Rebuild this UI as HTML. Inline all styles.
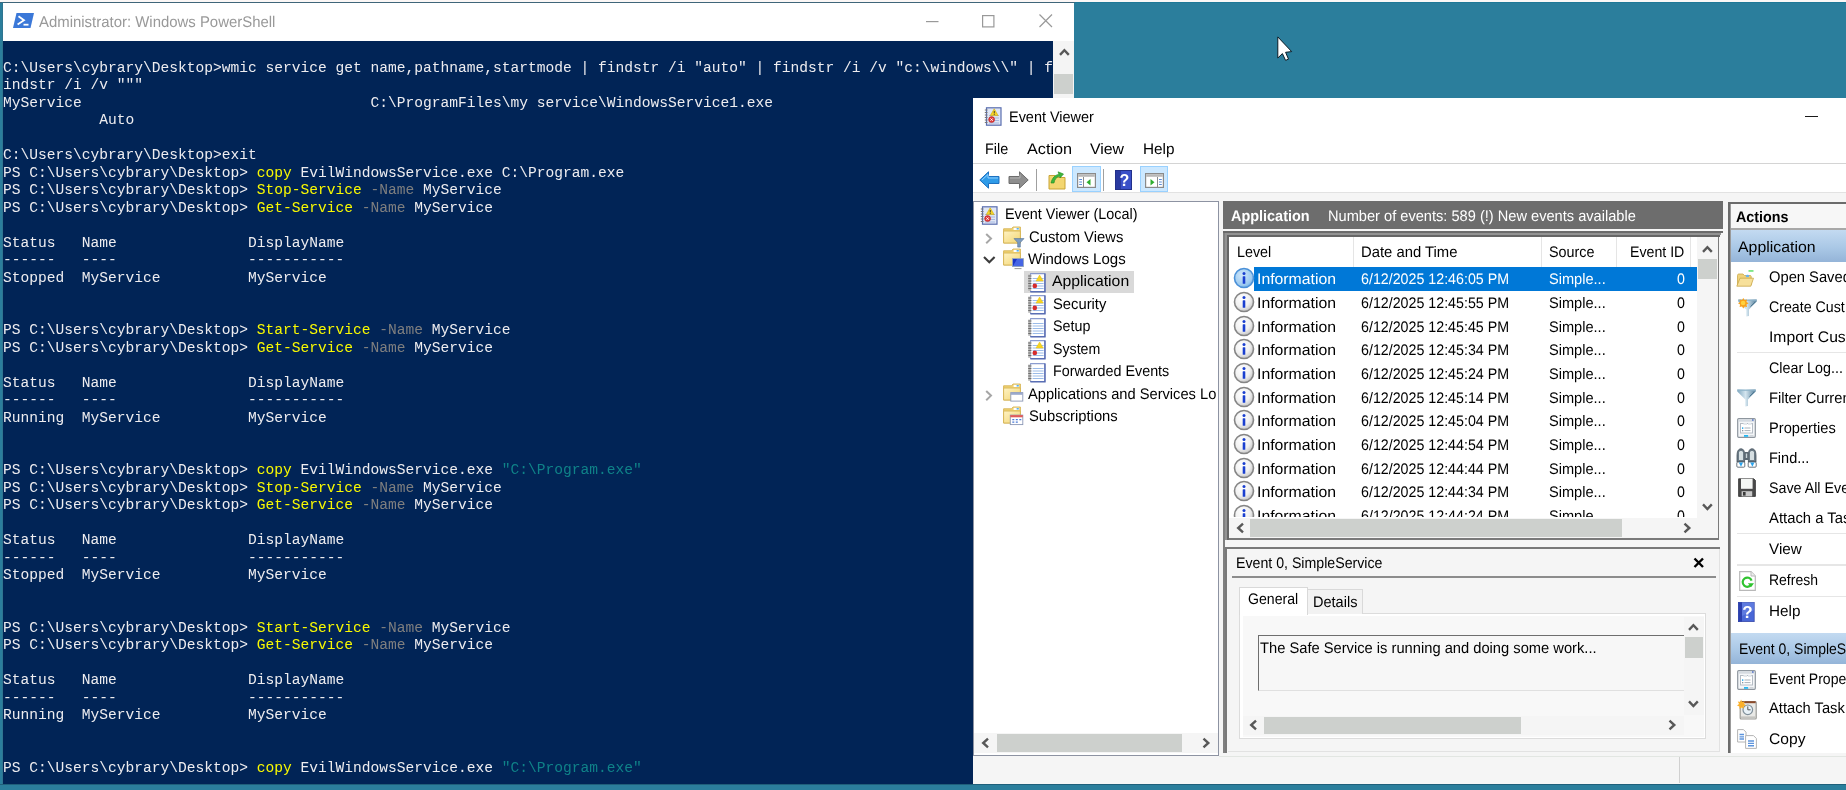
<!DOCTYPE html>
<html><head><meta charset="utf-8"><title>Desktop</title>
<style>
html,body{margin:0;padding:0}
body{width:1846px;height:790px;overflow:hidden;position:relative;background:#2b7e9c;font-family:"Liberation Sans",sans-serif;font-size:15.3px;color:#000}
.a{position:absolute}
.t{position:absolute;white-space:pre;line-height:20px;height:20px;transform-origin:0 0;text-rendering:geometricPrecision}
#ps{position:absolute;left:2px;top:2px;width:1072.3px;height:782.5px;overflow:hidden}
#con{position:absolute;left:.8px;top:38.6px;width:1050.4px;height:746px;background:#012456;overflow:hidden;color:#eeedf0;font-family:"Liberation Mono",monospace;font-size:14.583px}
.pl{position:absolute;left:.3px;white-space:pre;line-height:17.5px;height:17.5px}
svg{position:absolute;overflow:visible}
</style></head><body>
<div id="all" style="position:absolute;left:0;top:0;width:1846px;height:790px;overflow:hidden;will-change:transform;background:#2b7e9c">
<!-- top edge highlight -->
<div class="a" style="left:0;top:0;width:1846px;height:3.1px;background:#1f7897"></div>
<div class="a" style="left:0;top:0;width:1075px;height:3.1px;background:#3f667a"></div>
<div class="a" style="left:0;top:0;width:1846px;height:1.6px;background:#fbf7f6"></div>
<div id="ps">
  <div class="a" style="left:0;top:0;width:.8px;height:784px;background:#2f7590"></div><div class="a" style="left:.8px;top:1.1px;width:1071.5px;height:38px;background:#fff"></div>
  <svg style="left:10.8px;top:10.7px" width="21" height="15" viewBox="0 0 21 15"><path d="M3.5 0H21L17.5 15H0Z" fill="#3b78d8"/><path d="M5.5 3.2L11 7.3L4.6 11.6" fill="none" stroke="#fff" stroke-width="1.8"/><path d="M10.5 11.7H15.5" stroke="#fff" stroke-width="1.8"/></svg>
  <div class="t" id="pstitle" style="left:37px;top:11.2px;font-size:15.5px;color:#999;transform:scaleX(.963)">Administrator: Windows PowerShell</div>
  <svg style="left:923.5px;top:18.7px" width="13" height="2"><rect width="12.5" height="1.2" fill="#999"/></svg>
  <svg style="left:980px;top:12.5px" width="13" height="13"><rect x=".6" y=".6" width="11.3" height="11.3" fill="none" stroke="#999" stroke-width="1.2"/></svg>
  <svg style="left:1037px;top:12px" width="14" height="14"><path d="M.5 .5L13 13M13 .5L.5 13" stroke="#999" stroke-width="1.2" fill="none"/></svg>
  <div id="con">
<div class="pl" style="top:19.10px">C:\Users\cybrary\Desktop&gt;wmic service get name,pathname,startmode | findstr /i "auto" | findstr /i /v "c:\windows\\" | f</div>
<div class="pl" style="top:36.60px">indstr /i /v """</div>
<div class="pl" style="top:54.10px">MyService                                 C:\ProgramFiles\my service\WindowsService1.exe</div>
<div class="pl" style="top:71.60px">           Auto</div>
<div class="pl" style="top:106.60px">C:\Users\cybrary\Desktop&gt;exit</div>
<div class="pl" style="top:124.10px">PS C:\Users\cybrary\Desktop&gt; <span style="color:#f9f900">copy</span> EvilWindowsService.exe C:\Program.exe</div>
<div class="pl" style="top:141.60px">PS C:\Users\cybrary\Desktop&gt; <span style="color:#f9f900">Stop-Service</span><span style="color:#7f7f7f"> -Name</span> MyService</div>
<div class="pl" style="top:159.10px">PS C:\Users\cybrary\Desktop&gt; <span style="color:#f9f900">Get-Service</span><span style="color:#7f7f7f"> -Name</span> MyService</div>
<div class="pl" style="top:194.10px">Status   Name               DisplayName</div>
<div class="pl" style="top:211.60px">------   ----               -----------</div>
<div class="pl" style="top:229.10px">Stopped  MyService          MyService</div>
<div class="pl" style="top:281.60px">PS C:\Users\cybrary\Desktop&gt; <span style="color:#f9f900">Start-Service</span><span style="color:#7f7f7f"> -Name</span> MyService</div>
<div class="pl" style="top:299.10px">PS C:\Users\cybrary\Desktop&gt; <span style="color:#f9f900">Get-Service</span><span style="color:#7f7f7f"> -Name</span> MyService</div>
<div class="pl" style="top:334.10px">Status   Name               DisplayName</div>
<div class="pl" style="top:351.60px">------   ----               -----------</div>
<div class="pl" style="top:369.10px">Running  MyService          MyService</div>
<div class="pl" style="top:421.60px">PS C:\Users\cybrary\Desktop&gt; <span style="color:#f9f900">copy</span> EvilWindowsService.exe <span style="color:#0f8288">"C:\Program.exe"</span></div>
<div class="pl" style="top:439.10px">PS C:\Users\cybrary\Desktop&gt; <span style="color:#f9f900">Stop-Service</span><span style="color:#7f7f7f"> -Name</span> MyService</div>
<div class="pl" style="top:456.60px">PS C:\Users\cybrary\Desktop&gt; <span style="color:#f9f900">Get-Service</span><span style="color:#7f7f7f"> -Name</span> MyService</div>
<div class="pl" style="top:491.60px">Status   Name               DisplayName</div>
<div class="pl" style="top:509.10px">------   ----               -----------</div>
<div class="pl" style="top:526.60px">Stopped  MyService          MyService</div>
<div class="pl" style="top:579.10px">PS C:\Users\cybrary\Desktop&gt; <span style="color:#f9f900">Start-Service</span><span style="color:#7f7f7f"> -Name</span> MyService</div>
<div class="pl" style="top:596.60px">PS C:\Users\cybrary\Desktop&gt; <span style="color:#f9f900">Get-Service</span><span style="color:#7f7f7f"> -Name</span> MyService</div>
<div class="pl" style="top:631.60px">Status   Name               DisplayName</div>
<div class="pl" style="top:649.10px">------   ----               -----------</div>
<div class="pl" style="top:666.60px">Running  MyService          MyService</div>
<div class="pl" style="top:719.10px">PS C:\Users\cybrary\Desktop&gt; <span style="color:#f9f900">copy</span> EvilWindowsService.exe <span style="color:#0f8288">"C:\Program.exe"</span></div>
  </div>
  <!-- scrollbar -->
  <div class="a" style="left:1051.2px;top:38.6px;width:21.1px;height:746px;background:#f4f4f4"></div>
  <svg style="left:1056.5px;top:46px" width="11" height="8"><path d="M1 6.8L5.4 2.2L9.8 6.8" stroke="#585858" stroke-width="2.4" fill="none"/></svg>
  <div class="a" style="left:1052.3px;top:71.8px;width:18.4px;height:19.8px;background:#cdd0cd"></div>
</div>
<!-- mouse cursor -->
<svg style="left:1277.2px;top:36.3px" width="16" height="26" viewBox="0 0 16 26"><path d="M.8 .9V22L5.4 17.6L8.6 24.4L11.5 23.1L8.6 16.3L14.7 15.6Z" fill="#fff" stroke="#0a1a24" stroke-width="1" stroke-linejoin="round"/></svg>
<div class="a" style="left:972.5px;top:97.5px;width:880.0px;height:688.0px;background:#f5f5f5;"></div>
<div class="a" style="left:973.0px;top:98.0px;width:880.0px;height:95.0px;background:#fff;"></div>
<div class="a" style="left:973.0px;top:163.0px;width:880.0px;height:1.3px;background:#d4d4d4;"></div>
<div class="a" style="left:973.0px;top:192.2px;width:880.0px;height:1.2px;background:#e2e2e2;"></div>
<svg style="left:984.0px;top:106.5px" width="18" height="19" viewBox="0 0 18 19"><rect x="2.5" y=".8" width="14.5" height="17.4" fill="#dfe6f5" stroke="#5a6fb0" stroke-width="1.2"/>
<path d="M5 8.5H15M5 11H15M5 13.5H15M5 16H15" stroke="#9fb2e0" stroke-width=".9"/>
<path d="M.8 3H3.5M.8 5.5H3.5M.8 8H3.5M.8 10.5H3.5M.8 13H3.5M.8 15.5H3.5" stroke="#777" stroke-width="1"/>
<path d="M10.2 1.8L14.2 8.6H6.2Z" fill="#f5d327" stroke="#c9a400" stroke-width=".5"/>
<rect x="9.8" y="4" width=".9" height="2.4" fill="#333"/><rect x="9.8" y="7" width=".9" height=".8" fill="#333"/>
<circle cx="7.6" cy="12.6" r="3" fill="#e03a3a" stroke="#b01c1c" stroke-width=".5"/>
<path d="M6.4 11.4L8.8 13.8M8.8 11.4L6.4 13.8" stroke="#fff" stroke-width=".9"/></svg>
<div class="t" id="t1" style="left:1009.1px;top:108.0px;transform:scaleX(0.9447);">Event Viewer</div>
<div class="a" style="left:1805.2px;top:115.7px;width:13.0px;height:1.4px;background:#1a1a1a;"></div>
<div class="t" id="t2" style="left:985.3px;top:140.0px;transform:scaleX(0.9401);">File</div>
<div class="t" id="t3" style="left:1026.9px;top:140.0px;transform:scaleX(1.0613);">Action</div>
<div class="t" id="t4" style="left:1090.0px;top:140.0px;transform:scaleX(1.0359);">View</div>
<div class="t" id="t5" style="left:1142.5px;top:140.0px;transform:scaleX(1.0011);">Help</div>
<svg style="left:978.5px;top:170.8px" width="21" height="18.4" viewBox="0 0 21 18.4"><path d="M.8 9L9.5 .8V5.5H20V12.5H9.5V17.2Z" fill="#2f9be8" stroke="#1c6fc0" stroke-width="1"/><path d="M3 9L9 3.5V7H19" fill="none" stroke="#8fd0ff" stroke-width="1"/></svg>
<svg style="left:1007.5px;top:170.8px" width="21" height="18.4" viewBox="0 0 21 18.4"><path d="M20.2 9L11.5 .8V5.5H1V12.5H11.5V17.2Z" fill="#8e8e8e" stroke="#6c6c6c" stroke-width="1"/><path d="M2 7H12V3.5" fill="none" stroke="#b5b5b5" stroke-width="1"/></svg>
<div class="a" style="left:1035.6px;top:169.0px;width:1.2px;height:22.0px;background:#a0a0a0;"></div>
<svg style="left:1047.5px;top:171.0px" width="18" height="19" viewBox="0 0 18 19"><path d="M1 4.5H7L8.5 6.5H17V18H1Z" fill="#f3d671" stroke="#c9a437" stroke-width="1"/><path d="M3 12C4 7 7 4 11 3.2L10 .8L15.5 3L12 7L11.5 5C8.5 6 6.5 8.5 6 12Z" fill="#3db53d" stroke="#1f8a1f" stroke-width=".6"/></svg>
<div class="a" style="left:1072.0px;top:166.0px;width:28.5px;height:25.5px;background:#cce8ff;box-shadow:inset 0 0 0 1px #99d1ff"></div>
<svg style="left:1077.0px;top:172.5px" width="19" height="15" viewBox="0 0 19 15"><rect x=".6" y=".6" width="17.8" height="13.8" fill="#fff" stroke="#8a8a8a" stroke-width="1.2"/><rect x="1.2" y="1.2" width="16.6" height="2.6" fill="#b8b8b8"/><path d="M6.5 4V14" stroke="#8a8a8a" stroke-width="1"/><path d="M2.2 6.5H5M2.2 9H5M2.2 11.5H5" stroke="#5b8dd9" stroke-width="1.2"/><path d="M13.5 6L9.5 9.2L13.5 12.4Z" fill="#2fae2f"/></svg>
<div class="a" style="left:1103.0px;top:169.0px;width:1.2px;height:22.0px;background:#a0a0a0;"></div>
<svg style="left:1115.0px;top:169.5px" width="17" height="20" viewBox="0 0 17 20"><rect x=".5" y=".5" width="16" height="19" fill="#3a50c8" stroke="#22308a" stroke-width="1"/><path d="M1 1H6V19H1Z" fill="#2a3aa0"/><text x="9.3" y="15.5" font-family="Liberation Sans,sans-serif" font-size="16" font-weight="bold" fill="#fff" text-anchor="middle">?</text></svg>
<div class="a" style="left:1139.5px;top:166.0px;width:28.5px;height:25.5px;background:#cce8ff;box-shadow:inset 0 0 0 1px #99d1ff"></div>
<svg style="left:1144.5px;top:172.5px" width="19" height="15" viewBox="0 0 19 15"><rect x=".6" y=".6" width="17.8" height="13.8" fill="#fff" stroke="#8a8a8a" stroke-width="1.2"/><rect x="1.2" y="1.2" width="16.6" height="2.6" fill="#b8b8b8"/><path d="M12.5 4V14" stroke="#8a8a8a" stroke-width="1"/><path d="M14 6.5H16.8M14 9H16.8M14 11.5H16.8" stroke="#5b8dd9" stroke-width="1.2"/><path d="M5.5 6L9.5 9.2L5.5 12.4Z" fill="#2fae2f"/></svg>
<div class="a" style="left:973.3px;top:201.0px;width:245.7px;height:555.0px;background:#8d93a2;"></div>
<div class="a" style="left:974.3px;top:202.0px;width:244.2px;height:552.7px;background:#fff;"></div>
<svg style="left:980.3px;top:206.0px" width="18" height="19" viewBox="0 0 18 19"><rect x="2.5" y=".8" width="14.5" height="17.4" fill="#dfe6f5" stroke="#5a6fb0" stroke-width="1.2"/>
<path d="M5 8.5H15M5 11H15M5 13.5H15M5 16H15" stroke="#9fb2e0" stroke-width=".9"/>
<path d="M.8 3H3.5M.8 5.5H3.5M.8 8H3.5M.8 10.5H3.5M.8 13H3.5M.8 15.5H3.5" stroke="#777" stroke-width="1"/>
<path d="M10.2 1.8L14.2 8.6H6.2Z" fill="#f5d327" stroke="#c9a400" stroke-width=".5"/>
<rect x="9.8" y="4" width=".9" height="2.4" fill="#333"/><rect x="9.8" y="7" width=".9" height=".8" fill="#333"/>
<circle cx="7.6" cy="12.6" r="3" fill="#e03a3a" stroke="#b01c1c" stroke-width=".5"/>
<path d="M6.4 11.4L8.8 13.8M8.8 11.4L6.4 13.8" stroke="#fff" stroke-width=".9"/></svg>
<div class="t" id="t6" style="left:1005.3px;top:205.0px;transform:scaleX(0.9412);">Event Viewer (Local)</div>
<svg style="left:985.2px;top:233.0px" width="8" height="12" viewBox="0 0 8 12"><path d="M1.2 1L6 5.6L1.2 10.2" stroke="#a6a6a6" stroke-width="2" fill="none"/></svg>
<svg style="left:1003.0px;top:225.5px" width="21" height="23" viewBox="0 0 21 23"><defs><linearGradient id="fo" x1="0" x2="1" y1="0" y2="1"><stop offset="0" stop-color="#fff3c4"/><stop offset="1" stop-color="#f2d572"/></linearGradient></defs><path d="M.6 2.8H8.6L10 1H17.4V17H.6Z" fill="#f1d373" stroke="#d6b455" stroke-width=".9"/><rect x="10.6" y="1.8" width="5.6" height="2.2" fill="#fff"/><rect x="13.6" y="2.1" width="2.2" height="1.4" fill="#4aa8ea"/><path d="M.6 5H17.4V17H.6Z" fill="url(#fo)" stroke="#d6b455" stroke-width=".9"/><g transform="translate(0,1.6)"><path d="M11 11H21L17.3 15V19.5H14.7V15Z" fill="#7d9cc0" stroke="#4f6f96" stroke-width=".6"/></g></svg>
<div class="t" id="t7" style="left:1028.7px;top:228.0px;transform:scaleX(0.9677);">Custom Views</div>
<svg style="left:982.6px;top:256.2px" width="13" height="8" viewBox="0 0 13 8"><path d="M1 1L6.3 6.3L11.6 1" stroke="#3c3c3c" stroke-width="2.1" fill="none"/></svg>
<svg style="left:1003.0px;top:247.9px" width="21" height="23" viewBox="0 0 21 23"><defs><linearGradient id="fo" x1="0" x2="1" y1="0" y2="1"><stop offset="0" stop-color="#fff3c4"/><stop offset="1" stop-color="#f2d572"/></linearGradient></defs><path d="M.6 2.8H8.6L10 1H17.4V17H.6Z" fill="#f1d373" stroke="#d6b455" stroke-width=".9"/><rect x="10.6" y="1.8" width="5.6" height="2.2" fill="#fff"/><rect x="13.6" y="2.1" width="2.2" height="1.4" fill="#4aa8ea"/><path d="M.6 5H17.4V17H.6Z" fill="url(#fo)" stroke="#d6b455" stroke-width=".9"/><g transform="translate(0,1.6)"><rect x="9.5" y="9" width="11" height="8" fill="#1a35c8" stroke="#9ab" stroke-width=".8"/><path d="M10 16.5L14 9.5H20V16.5Z" fill="#5a7af0" opacity=".7"/><path d="M11.5 19H18.5" stroke="#999" stroke-width="1"/></g></svg>
<div class="t" id="t8" style="left:1028.2px;top:250.0px;transform:scaleX(0.9817);">Windows Logs</div>
<div class="a" style="left:1024.3px;top:271.0px;width:109.7px;height:22.0px;background:#d9d9d9;"></div>
<svg style="left:1028.0px;top:272.9px" width="18" height="19" viewBox="0 0 18 19"><rect x="2.6" y=".7" width="14.2" height="17.8" fill="#fff" stroke="#6f84c4" stroke-width="1"/><path d="M17 .4V18.8H2.4" fill="none" stroke="#5468b0" stroke-width="1.3"/><path d="M4.6 5.5H15.6M4.6 8H15.6M4.6 10.5H15.6M4.6 13H15.6M4.6 15.5H15.6" stroke="#9bbbe8" stroke-width="1.1"/><rect x=".2" y="1.6" width="2.8" height="16.2" fill="#b9b9b9"/><path d="M.2 3H3.4M.2 5.5H3.4M.2 8H3.4M.2 10.5H3.4M.2 13H3.4M.2 15.5H3.4" stroke="#6e6e6e" stroke-width="1.1"/><path d="M11.6 2L15.2 8H8Z" fill="#f7d422" stroke="#e8c010" stroke-width=".5"/><circle cx="6.8" cy="12.9" r="2.3" fill="#d62c2c"/></svg>
<div class="t" id="t9" style="left:1052.2px;top:272.0px;transform:scaleX(1.0310);">Application</div>
<svg style="left:1028.0px;top:295.3px" width="18" height="19" viewBox="0 0 18 19"><rect x="2.6" y=".7" width="14.2" height="17.8" fill="#fff" stroke="#6f84c4" stroke-width="1"/><path d="M17 .4V18.8H2.4" fill="none" stroke="#5468b0" stroke-width="1.3"/><path d="M4.6 5.5H15.6M4.6 8H15.6M4.6 10.5H15.6M4.6 13H15.6M4.6 15.5H15.6" stroke="#9bbbe8" stroke-width="1.1"/><rect x=".2" y="1.6" width="2.8" height="16.2" fill="#b9b9b9"/><path d="M.2 3H3.4M.2 5.5H3.4M.2 8H3.4M.2 10.5H3.4M.2 13H3.4M.2 15.5H3.4" stroke="#6e6e6e" stroke-width="1.1"/><path d="M11.6 2L15.2 8H8Z" fill="#f7d422" stroke="#e8c010" stroke-width=".5"/><circle cx="6.8" cy="12.9" r="2.3" fill="#d62c2c"/></svg>
<div class="t" id="t10" style="left:1053.1px;top:295.0px;transform:scaleX(0.9650);">Security</div>
<svg style="left:1028.0px;top:317.7px" width="18" height="19" viewBox="0 0 18 19"><rect x="2.6" y=".7" width="14.2" height="17.8" fill="#fff" stroke="#6f84c4" stroke-width="1"/><path d="M17 .4V18.8H2.4" fill="none" stroke="#5468b0" stroke-width="1.3"/><path d="M4.6 5.5H15.6M4.6 8H15.6M4.6 10.5H15.6M4.6 13H15.6M4.6 15.5H15.6" stroke="#9bbbe8" stroke-width="1.1"/><rect x=".2" y="1.6" width="2.8" height="16.2" fill="#b9b9b9"/><path d="M.2 3H3.4M.2 5.5H3.4M.2 8H3.4M.2 10.5H3.4M.2 13H3.4M.2 15.5H3.4" stroke="#6e6e6e" stroke-width="1.1"/></svg>
<div class="t" id="t11" style="left:1053.2px;top:317.0px;transform:scaleX(0.9346);">Setup</div>
<svg style="left:1028.0px;top:340.1px" width="18" height="19" viewBox="0 0 18 19"><rect x="2.6" y=".7" width="14.2" height="17.8" fill="#fff" stroke="#6f84c4" stroke-width="1"/><path d="M17 .4V18.8H2.4" fill="none" stroke="#5468b0" stroke-width="1.3"/><path d="M4.6 5.5H15.6M4.6 8H15.6M4.6 10.5H15.6M4.6 13H15.6M4.6 15.5H15.6" stroke="#9bbbe8" stroke-width="1.1"/><rect x=".2" y="1.6" width="2.8" height="16.2" fill="#b9b9b9"/><path d="M.2 3H3.4M.2 5.5H3.4M.2 8H3.4M.2 10.5H3.4M.2 13H3.4M.2 15.5H3.4" stroke="#6e6e6e" stroke-width="1.1"/><path d="M11.6 2L15.2 8H8Z" fill="#f7d422" stroke="#e8c010" stroke-width=".5"/><circle cx="6.8" cy="12.9" r="2.3" fill="#d62c2c"/></svg>
<div class="t" id="t12" style="left:1053.2px;top:340.0px;transform:scaleX(0.9265);">System</div>
<svg style="left:1028.0px;top:362.5px" width="18" height="19" viewBox="0 0 18 19"><rect x="2.6" y=".7" width="14.2" height="17.8" fill="#fff" stroke="#6f84c4" stroke-width="1"/><path d="M17 .4V18.8H2.4" fill="none" stroke="#5468b0" stroke-width="1.3"/><path d="M4.6 5.5H15.6M4.6 8H15.6M4.6 10.5H15.6M4.6 13H15.6M4.6 15.5H15.6" stroke="#9bbbe8" stroke-width="1.1"/><rect x=".2" y="1.6" width="2.8" height="16.2" fill="#b9b9b9"/><path d="M.2 3H3.4M.2 5.5H3.4M.2 8H3.4M.2 10.5H3.4M.2 13H3.4M.2 15.5H3.4" stroke="#6e6e6e" stroke-width="1.1"/></svg>
<div class="t" id="t13" style="left:1053.2px;top:362.0px;transform:scaleX(0.9366);">Forwarded Events</div>
<svg style="left:985.2px;top:390.0px" width="8" height="12" viewBox="0 0 8 12"><path d="M1.2 1L6 5.6L1.2 10.2" stroke="#a6a6a6" stroke-width="2" fill="none"/></svg>
<svg style="left:1003.0px;top:383.3px" width="21" height="23" viewBox="0 0 21 23"><defs><linearGradient id="fo" x1="0" x2="1" y1="0" y2="1"><stop offset="0" stop-color="#fff3c4"/><stop offset="1" stop-color="#f2d572"/></linearGradient></defs><path d="M.6 2.8H8.6L10 1H17.4V17H.6Z" fill="#f1d373" stroke="#d6b455" stroke-width=".9"/><rect x="10.6" y="1.8" width="5.6" height="2.2" fill="#fff"/><rect x="13.6" y="2.1" width="2.2" height="1.4" fill="#4aa8ea"/><path d="M.6 5H17.4V17H.6Z" fill="url(#fo)" stroke="#d6b455" stroke-width=".9"/><g transform="translate(0,1.6)"><g transform="translate(-1.2,-2)"><rect x="9" y="10" width="12" height="8.5" fill="#fff" stroke="#8a97b5" stroke-width=".9"/><rect x="9" y="10" width="12" height="2.2" fill="#9aa9cc"/></g></g></svg>
<div class="t" id="t14" style="left:1028.2px;top:385.0px;transform:scaleX(0.9587);">Applications and Services Lo</div>
<svg style="left:1003.0px;top:405.7px" width="21" height="23" viewBox="0 0 21 23"><defs><linearGradient id="fo" x1="0" x2="1" y1="0" y2="1"><stop offset="0" stop-color="#fff3c4"/><stop offset="1" stop-color="#f2d572"/></linearGradient></defs><path d="M.6 2.8H8.6L10 1H17.4V17H.6Z" fill="#f1d373" stroke="#d6b455" stroke-width=".9"/><rect x="10.6" y="1.8" width="5.6" height="2.2" fill="#fff"/><rect x="13.6" y="2.1" width="2.2" height="1.4" fill="#4aa8ea"/><path d="M.6 5H17.4V17H.6Z" fill="url(#fo)" stroke="#d6b455" stroke-width=".9"/><g transform="translate(0,1.6)"><g transform="translate(-1.2,-2)"><rect x="8.5" y="9.5" width="12.5" height="9.5" fill="#fff" stroke="#8a97b5" stroke-width=".9"/><rect x="8.5" y="9.5" width="12.5" height="2.2" fill="#e05a5a"/><path d="M10.5 14H12.5M14 14H16M17.5 14H19.5M10.5 16.5H12.5M14 16.5H16" stroke="#4a7ad8" stroke-width="1.4"/></g></g></svg>
<div class="t" id="t15" style="left:1029.4px;top:407.0px;transform:scaleX(0.9663);">Subscriptions</div>
<div class="a" style="left:974.3px;top:733.0px;width:244.2px;height:20.4px;background:#f5f5f5;"></div>
<div class="a" style="left:997.0px;top:734.3px;width:184.5px;height:17.5px;background:#cdd0cd;"></div>
<svg style="left:981.0px;top:736.8px" width="8" height="12" viewBox="0 0 8 12"><path d="M7 1.6L2.2 6L7 10.4" stroke="#585858" stroke-width="2.4" fill="none"/></svg>
<svg style="left:1202.0px;top:736.8px" width="8" height="12" viewBox="0 0 8 12"><path d="M1.5 1.6L6.3 6L1.5 10.4" stroke="#585858" stroke-width="2.4" fill="none"/></svg>
<div class="a" style="left:1223.2px;top:201.4px;width:499.5px;height:27.4px;background:#6d6d6d;"></div>
<div class="t" id="t16" style="left:1230.7px;top:207.0px;color:#fff;font-weight:bold;transform:scaleX(0.9435);">Application</div>
<div class="t" id="t17" style="left:1327.7px;top:207.0px;color:#fff;transform:scaleX(0.9552);">Number of events: 589 (!) New events available</div>
<div class="a" style="left:1223.2px;top:229.0px;width:505.5px;height:525.0px;background:#f6f6f6;"></div>
<div class="a" style="left:1223.2px;top:231.4px;width:2.0px;height:522.0px;background:#808080;"></div>
<div class="a" style="left:1223.2px;top:231.4px;width:499.5px;height:1.9px;background:#6b6b6b;"></div>
<div class="a" style="left:1224.7px;top:233.3px;width:496.5px;height:1.9px;background:#939393;"></div>
<div class="a" style="left:1226.2px;top:235.2px;width:493.5px;height:1.8px;background:#666;"></div>
<div class="a" style="left:1225.2px;top:233.3px;width:2.0px;height:306.3px;background:#939393;"></div>
<div class="a" style="left:1227.2px;top:235.2px;width:1.7px;height:304.4px;background:#666;"></div>
<div class="a" style="left:1718.1px;top:237.0px;width:1.2px;height:302.6px;background:#7a7a7a;"></div>
<div class="a" style="left:1228.9px;top:538.0px;width:490.4px;height:1.6px;background:#7a7a7a;"></div>
<div class="a" style="left:1228.9px;top:237.0px;width:489.3px;height:300.5px;background:#fff;"></div>
<div class="a" style="left:1353.0px;top:237.0px;width:1.2px;height:29.5px;background:#e5e5e5;"></div>
<div class="a" style="left:1541.0px;top:237.0px;width:1.2px;height:29.5px;background:#e5e5e5;"></div>
<div class="a" style="left:1615.5px;top:237.0px;width:1.2px;height:29.5px;background:#e5e5e5;"></div>
<div class="a" style="left:1690.3px;top:237.0px;width:1.2px;height:29.5px;background:#e5e5e5;"></div>
<div class="t" id="t18" style="left:1236.5px;top:243.0px;transform:scaleX(0.9341);">Level</div>
<div class="t" id="t19" style="left:1361.0px;top:243.0px;transform:scaleX(0.9694);">Date and Time</div>
<div class="t" id="t20" style="left:1549.1px;top:243.0px;transform:scaleX(0.9383);">Source</div>
<div class="t" id="t21" style="left:1630.1px;top:243.0px;transform:scaleX(0.9264);">Event ID</div>
<div class="a" style="left:1228.9px;top:267.0px;width:468.1px;height:250.3px;overflow:hidden">
<svg width="0" height="0" style="left:0;top:0"><defs><radialGradient id="g1" cx=".4" cy=".35" r=".75"><stop offset="0" stop-color="#fff"/><stop offset=".55" stop-color="#f0f0f0"/><stop offset="1" stop-color="#b8b8b8"/></radialGradient><radialGradient id="g2" cx=".4" cy=".35" r=".75"><stop offset="0" stop-color="#cfe6fa"/><stop offset=".7" stop-color="#9ccaf0"/><stop offset="1" stop-color="#5aa0e0"/></radialGradient></defs></svg>
<div class="a" style="left:25.3px;top:0.1px;width:442.8px;height:23.6px;background:#0078d7;"></div>
<svg style="left:5.1px;top:1.2px" width="20" height="20" viewBox="0 0 20 20"><circle cx="10" cy="10" r="9.5" fill="url(#g2)" stroke="#4a90d8" stroke-width="1.6"/><circle cx="10" cy="5.6" r="1.5" fill="#1a3fd0"/><rect x="8.7" y="8.2" width="2.6" height="7.6" rx=".6" fill="#1a3fd0"/></svg>
<div class="t" id="t22" style="left:27.8px;top:3.0px;color:#fff;transform:scaleX(1.0331);">Information</div>
<div class="t" id="t23" style="left:132.5px;top:3.0px;color:#fff;transform:scaleX(0.9309);">6/12/2025 12:46:05 PM</div>
<div class="t" id="t24" style="left:320.1px;top:3.0px;color:#fff;transform:scaleX(0.9528);">Simple...</div>
<div class="t" id="t25" style="left:447.8px;top:3.0px;color:#fff;transform:scaleX(0.9300);">0</div>
<svg style="left:5.1px;top:24.9px" width="20" height="20" viewBox="0 0 20 20"><circle cx="10" cy="10" r="9.5" fill="url(#g1)" stroke="#858585" stroke-width="1.6"/><circle cx="10" cy="5.6" r="1.5" fill="#1a3fd0"/><rect x="8.7" y="8.2" width="2.6" height="7.6" rx=".6" fill="#1a3fd0"/></svg>
<div class="t" id="t26" style="left:27.8px;top:27.0px;transform:scaleX(1.0331);">Information</div>
<div class="t" id="t27" style="left:132.5px;top:27.0px;transform:scaleX(0.9309);">6/12/2025 12:45:55 PM</div>
<div class="t" id="t28" style="left:320.1px;top:27.0px;transform:scaleX(0.9528);">Simple...</div>
<div class="t" id="t29" style="left:447.8px;top:27.0px;transform:scaleX(0.9300);">0</div>
<svg style="left:5.1px;top:48.6px" width="20" height="20" viewBox="0 0 20 20"><circle cx="10" cy="10" r="9.5" fill="url(#g1)" stroke="#858585" stroke-width="1.6"/><circle cx="10" cy="5.6" r="1.5" fill="#1a3fd0"/><rect x="8.7" y="8.2" width="2.6" height="7.6" rx=".6" fill="#1a3fd0"/></svg>
<div class="t" id="t30" style="left:27.8px;top:51.0px;transform:scaleX(1.0331);">Information</div>
<div class="t" id="t31" style="left:132.5px;top:51.0px;transform:scaleX(0.9309);">6/12/2025 12:45:45 PM</div>
<div class="t" id="t32" style="left:320.1px;top:51.0px;transform:scaleX(0.9528);">Simple...</div>
<div class="t" id="t33" style="left:447.8px;top:51.0px;transform:scaleX(0.9300);">0</div>
<svg style="left:5.1px;top:72.2px" width="20" height="20" viewBox="0 0 20 20"><circle cx="10" cy="10" r="9.5" fill="url(#g1)" stroke="#858585" stroke-width="1.6"/><circle cx="10" cy="5.6" r="1.5" fill="#1a3fd0"/><rect x="8.7" y="8.2" width="2.6" height="7.6" rx=".6" fill="#1a3fd0"/></svg>
<div class="t" id="t34" style="left:27.8px;top:74.0px;transform:scaleX(1.0331);">Information</div>
<div class="t" id="t35" style="left:132.5px;top:74.0px;transform:scaleX(0.9309);">6/12/2025 12:45:34 PM</div>
<div class="t" id="t36" style="left:320.1px;top:74.0px;transform:scaleX(0.9528);">Simple...</div>
<div class="t" id="t37" style="left:447.8px;top:74.0px;transform:scaleX(0.9300);">0</div>
<svg style="left:5.1px;top:95.9px" width="20" height="20" viewBox="0 0 20 20"><circle cx="10" cy="10" r="9.5" fill="url(#g1)" stroke="#858585" stroke-width="1.6"/><circle cx="10" cy="5.6" r="1.5" fill="#1a3fd0"/><rect x="8.7" y="8.2" width="2.6" height="7.6" rx=".6" fill="#1a3fd0"/></svg>
<div class="t" id="t38" style="left:27.8px;top:98.0px;transform:scaleX(1.0331);">Information</div>
<div class="t" id="t39" style="left:132.5px;top:98.0px;transform:scaleX(0.9309);">6/12/2025 12:45:24 PM</div>
<div class="t" id="t40" style="left:320.1px;top:98.0px;transform:scaleX(0.9528);">Simple...</div>
<div class="t" id="t41" style="left:447.8px;top:98.0px;transform:scaleX(0.9300);">0</div>
<svg style="left:5.1px;top:119.6px" width="20" height="20" viewBox="0 0 20 20"><circle cx="10" cy="10" r="9.5" fill="url(#g1)" stroke="#858585" stroke-width="1.6"/><circle cx="10" cy="5.6" r="1.5" fill="#1a3fd0"/><rect x="8.7" y="8.2" width="2.6" height="7.6" rx=".6" fill="#1a3fd0"/></svg>
<div class="t" id="t42" style="left:27.8px;top:122.0px;transform:scaleX(1.0331);">Information</div>
<div class="t" id="t43" style="left:132.5px;top:122.0px;transform:scaleX(0.9309);">6/12/2025 12:45:14 PM</div>
<div class="t" id="t44" style="left:320.1px;top:122.0px;transform:scaleX(0.9528);">Simple...</div>
<div class="t" id="t45" style="left:447.8px;top:122.0px;transform:scaleX(0.9300);">0</div>
<svg style="left:5.1px;top:143.3px" width="20" height="20" viewBox="0 0 20 20"><circle cx="10" cy="10" r="9.5" fill="url(#g1)" stroke="#858585" stroke-width="1.6"/><circle cx="10" cy="5.6" r="1.5" fill="#1a3fd0"/><rect x="8.7" y="8.2" width="2.6" height="7.6" rx=".6" fill="#1a3fd0"/></svg>
<div class="t" id="t46" style="left:27.8px;top:145.0px;transform:scaleX(1.0331);">Information</div>
<div class="t" id="t47" style="left:132.5px;top:145.0px;transform:scaleX(0.9309);">6/12/2025 12:45:04 PM</div>
<div class="t" id="t48" style="left:320.1px;top:145.0px;transform:scaleX(0.9528);">Simple...</div>
<div class="t" id="t49" style="left:447.8px;top:145.0px;transform:scaleX(0.9300);">0</div>
<svg style="left:5.1px;top:167.0px" width="20" height="20" viewBox="0 0 20 20"><circle cx="10" cy="10" r="9.5" fill="url(#g1)" stroke="#858585" stroke-width="1.6"/><circle cx="10" cy="5.6" r="1.5" fill="#1a3fd0"/><rect x="8.7" y="8.2" width="2.6" height="7.6" rx=".6" fill="#1a3fd0"/></svg>
<div class="t" id="t50" style="left:27.8px;top:169.0px;transform:scaleX(1.0331);">Information</div>
<div class="t" id="t51" style="left:132.5px;top:169.0px;transform:scaleX(0.9309);">6/12/2025 12:44:54 PM</div>
<div class="t" id="t52" style="left:320.1px;top:169.0px;transform:scaleX(0.9528);">Simple...</div>
<div class="t" id="t53" style="left:447.8px;top:169.0px;transform:scaleX(0.9300);">0</div>
<svg style="left:5.1px;top:190.6px" width="20" height="20" viewBox="0 0 20 20"><circle cx="10" cy="10" r="9.5" fill="url(#g1)" stroke="#858585" stroke-width="1.6"/><circle cx="10" cy="5.6" r="1.5" fill="#1a3fd0"/><rect x="8.7" y="8.2" width="2.6" height="7.6" rx=".6" fill="#1a3fd0"/></svg>
<div class="t" id="t54" style="left:27.8px;top:193.0px;transform:scaleX(1.0331);">Information</div>
<div class="t" id="t55" style="left:132.5px;top:193.0px;transform:scaleX(0.9309);">6/12/2025 12:44:44 PM</div>
<div class="t" id="t56" style="left:320.1px;top:193.0px;transform:scaleX(0.9528);">Simple...</div>
<div class="t" id="t57" style="left:447.8px;top:193.0px;transform:scaleX(0.9300);">0</div>
<svg style="left:5.1px;top:214.3px" width="20" height="20" viewBox="0 0 20 20"><circle cx="10" cy="10" r="9.5" fill="url(#g1)" stroke="#858585" stroke-width="1.6"/><circle cx="10" cy="5.6" r="1.5" fill="#1a3fd0"/><rect x="8.7" y="8.2" width="2.6" height="7.6" rx=".6" fill="#1a3fd0"/></svg>
<div class="t" id="t58" style="left:27.8px;top:216.0px;transform:scaleX(1.0331);">Information</div>
<div class="t" id="t59" style="left:132.5px;top:216.0px;transform:scaleX(0.9309);">6/12/2025 12:44:34 PM</div>
<div class="t" id="t60" style="left:320.1px;top:216.0px;transform:scaleX(0.9528);">Simple...</div>
<div class="t" id="t61" style="left:447.8px;top:216.0px;transform:scaleX(0.9300);">0</div>
<svg style="left:5.1px;top:238.0px" width="20" height="20" viewBox="0 0 20 20"><circle cx="10" cy="10" r="9.5" fill="url(#g1)" stroke="#858585" stroke-width="1.6"/><circle cx="10" cy="5.6" r="1.5" fill="#1a3fd0"/><rect x="8.7" y="8.2" width="2.6" height="7.6" rx=".6" fill="#1a3fd0"/></svg>
<div class="t" id="t62" style="left:27.8px;top:240.0px;transform:scaleX(1.0331);">Information</div>
<div class="t" id="t63" style="left:132.5px;top:240.0px;transform:scaleX(0.9309);">6/12/2025 12:44:24 PM</div>
<div class="t" id="t64" style="left:320.1px;top:240.0px;transform:scaleX(0.9528);">Simple...</div>
<div class="t" id="t65" style="left:447.8px;top:240.0px;transform:scaleX(0.9300);">0</div>
</div>
<div class="a" style="left:1697.0px;top:237.0px;width:21.2px;height:280.6px;background:#f5f5f5;"></div>
<div class="a" style="left:1698.4px;top:258.8px;width:18.2px;height:20.0px;background:#cdd0cd;"></div>
<svg style="left:1702.0px;top:244.5px" width="11" height="8" viewBox="0 0 11 8"><path d="M1 6.8L5.4 2.2L9.8 6.8" stroke="#585858" stroke-width="2.4" fill="none"/></svg>
<svg style="left:1702.0px;top:502.5px" width="11" height="8" viewBox="0 0 11 8"><path d="M1 1.4L5.4 6L9.8 1.4" stroke="#585858" stroke-width="2.4" fill="none"/></svg>
<div class="a" style="left:1228.9px;top:517.6px;width:489.3px;height:20.4px;background:#f5f5f5;"></div>
<div class="a" style="left:1250.0px;top:519.0px;width:371.5px;height:17.5px;background:#cdd0cd;"></div>
<svg style="left:1236.0px;top:521.5px" width="8" height="12" viewBox="0 0 8 12"><path d="M7 1.6L2.2 6L7 10.4" stroke="#585858" stroke-width="2.4" fill="none"/></svg>
<svg style="left:1683.0px;top:521.6px" width="8" height="12" viewBox="0 0 8 12"><path d="M1.5 1.6L6.3 6L1.5 10.4" stroke="#585858" stroke-width="2.4" fill="none"/></svg>
<div class="a" style="left:1225.2px;top:547.0px;width:495.3px;height:1.9px;background:#7a7a7a;"></div>
<div class="a" style="left:1225.2px;top:547.0px;width:2.3px;height:206.0px;background:#7a7a7a;"></div>
<div class="a" style="left:1227.5px;top:548.9px;width:491.0px;height:204.0px;background:#f5f5f5;"></div>
<div class="a" style="left:1227.5px;top:751.0px;width:492.5px;height:1.0px;background:#e2e2e2;"></div>
<div class="a" style="left:1719.3px;top:549.0px;width:1.0px;height:203.0px;background:#e2e2e2;"></div>
<div class="t" id="t66" style="left:1235.7px;top:554.0px;transform:scaleX(0.9261);">Event 0, SimpleService</div>
<svg style="left:1692.5px;top:556.5px" width="12" height="12" viewBox="0 0 12 12"><path d="M1.5 1.5L10 10M10 1.5L1.5 10" stroke="#000" stroke-width="2.4" fill="none"/></svg>
<div class="a" style="left:1232.0px;top:576.3px;width:483.5px;height:1.6px;background:#8c8c8c;"></div>
<div class="a" style="left:1238.7px;top:613.0px;width:467.3px;height:126.3px;background:#dcdcdc;"></div>
<div class="a" style="left:1239.7px;top:614.0px;width:465.3px;height:124.3px;background:#fff;"></div>
<div class="a" style="left:1243.3px;top:615.6px;width:461.2px;height:121.0px;background:#f8f8f8;"></div>
<div class="a" style="left:1307.2px;top:588.8px;width:56.0px;height:25.2px;background:#d9d9d9;"></div>
<div class="a" style="left:1308.2px;top:589.8px;width:54.0px;height:24.2px;background:#f2f2f2;"></div>
<div class="a" style="left:1238.7px;top:586.9px;width:69.5px;height:28.0px;background:#d9d9d9;"></div>
<div class="a" style="left:1239.7px;top:587.9px;width:67.5px;height:28.0px;background:#fff;"></div>
<div class="t" id="t67" style="left:1247.8px;top:590.0px;transform:scaleX(0.9214);">General</div>
<div class="t" id="t68" style="left:1312.6px;top:593.0px;transform:scaleX(0.9494);">Details</div>
<div class="a" style="left:1257.5px;top:635.2px;width:425.5px;height:53.5px;background:#f7f7f7;border-top:1.8px solid #6e6e6e;border-left:1.6px solid #6e6e6e;border-bottom:1px solid #e0e0e0"></div>
<div class="t" id="t69" style="left:1259.8px;top:639.0px;transform:scaleX(0.9609);">The Safe Service is running and doing some work...</div>
<div class="a" style="left:1684.0px;top:617.0px;width:19.5px;height:98.0px;background:#f5f5f5;"></div>
<div class="a" style="left:1684.6px;top:637.0px;width:18.3px;height:20.8px;background:#cdd0cd;"></div>
<svg style="left:1688.0px;top:623.0px" width="11" height="8" viewBox="0 0 11 8"><path d="M1 6.8L5.4 2.2L9.8 6.8" stroke="#585858" stroke-width="2.4" fill="none"/></svg>
<svg style="left:1688.0px;top:700.0px" width="11" height="8" viewBox="0 0 11 8"><path d="M1 1.4L5.4 6L9.8 1.4" stroke="#585858" stroke-width="2.4" fill="none"/></svg>
<div class="a" style="left:1243.0px;top:716.0px;width:441.0px;height:18.5px;background:#f5f5f5;"></div>
<div class="a" style="left:1264.4px;top:716.5px;width:257.1px;height:17.5px;background:#cdd0cd;"></div>
<svg style="left:1249.0px;top:719.0px" width="8" height="12" viewBox="0 0 8 12"><path d="M7 1.6L2.2 6L7 10.4" stroke="#585858" stroke-width="2.4" fill="none"/></svg>
<svg style="left:1668.0px;top:719.0px" width="8" height="12" viewBox="0 0 8 12"><path d="M1.5 1.6L6.3 6L1.5 10.4" stroke="#585858" stroke-width="2.4" fill="none"/></svg>
<div class="a" style="left:1728.4px;top:201.6px;width:130.0px;height:552.4px;background:#6b6b6b;"></div>
<div class="a" style="left:1729.6px;top:203.5px;width:1.2px;height:550.5px;background:#9a9a9a;"></div>
<div class="a" style="left:1730.7px;top:203.5px;width:130.0px;height:549.5px;background:#fff;"></div>
<div class="a" style="left:1730.7px;top:203.5px;width:130.0px;height:25.0px;background:#f7f7f7;"></div>
<div class="t" id="t70" style="left:1735.7px;top:208.0px;font-weight:bold;transform:scaleX(0.9354);">Actions</div>
<div class="a" style="left:1730.6px;top:228.2px;width:130.0px;height:1.8px;background:#a8a8a8;"></div>
<div class="a" style="left:1730.7px;top:230.4px;width:130.0px;height:31.2px;background:linear-gradient(#c3daf1,#aac8e6 55%,#94b4d8);"></div>
<div class="t" id="t71" style="left:1738.1px;top:238.0px;transform:scaleX(1.0365);">Application</div>
<div class="t" id="t72" style="left:1769.0px;top:268.0px;transform:scaleX(0.9626);">Open Saved</div>
<div class="t" id="t73" style="left:1769.1px;top:298.0px;transform:scaleX(0.9271);">Create Cust</div>
<div class="t" id="t74" style="left:1769.0px;top:328.0px;transform:scaleX(1.0253);">Import Cust</div>
<div class="t" id="t75" style="left:1769.1px;top:359.0px;transform:scaleX(0.9341);">Clear Log...</div>
<div class="t" id="t76" style="left:1769.0px;top:389.0px;transform:scaleX(0.9599);">Filter Curren</div>
<div class="t" id="t77" style="left:1769.0px;top:419.0px;transform:scaleX(0.9569);">Properties</div>
<div class="t" id="t78" style="left:1769.1px;top:449.0px;transform:scaleX(0.9478);">Find...</div>
<div class="t" id="t79" style="left:1769.1px;top:479.0px;transform:scaleX(0.9325);">Save All Eve</div>
<div class="t" id="t80" style="left:1769.0px;top:509.0px;transform:scaleX(0.9702);">Attach a Tas</div>
<div class="t" id="t81" style="left:1769.0px;top:540.0px;transform:scaleX(0.9971);">View</div>
<div class="t" id="t82" style="left:1769.1px;top:571.0px;transform:scaleX(0.9135);">Refresh</div>
<div class="t" id="t83" style="left:1769.0px;top:602.0px;transform:scaleX(0.9977);">Help</div>
<div class="a" style="left:1736.5px;top:351.8px;width:120.0px;height:1.2px;background:#e6e6e6;"></div>
<div class="a" style="left:1736.5px;top:533.0px;width:120.0px;height:1.2px;background:#e6e6e6;"></div>
<div class="a" style="left:1736.5px;top:564.4px;width:120.0px;height:1.2px;background:#e6e6e6;"></div>
<div class="a" style="left:1736.5px;top:595.8px;width:120.0px;height:1.2px;background:#e6e6e6;"></div>
<div class="a" style="left:1730.7px;top:633.2px;width:130.0px;height:30.6px;background:linear-gradient(#c3daf1,#aac8e6 55%,#94b4d8);"></div>
<div class="t" id="t84" style="left:1739.0px;top:640.0px;transform:scaleX(0.9129);">Event 0, SimpleS</div>
<div class="t" id="t85" style="left:1769.1px;top:670.0px;transform:scaleX(0.9179);">Event Prope</div>
<div class="t" id="t86" style="left:1769.0px;top:699.0px;transform:scaleX(0.9623);">Attach Task</div>
<div class="t" id="t87" style="left:1769.0px;top:730.0px;transform:scaleX(1.0202);">Copy</div>
<svg style="left:1736.2px;top:269.5px" width="19" height="18" viewBox="0 0 19 18"><rect x="12.5" y=".2" width="5" height="1.5" fill="#5fe06a"/><path d="M1.5 5.5C1.5 4.5 2 4 3 4H7L8.5 5.5H14C15 5.5 15.2 6 15.2 7V15H1.5Z" fill="#f0d27a" stroke="#c9a84a" stroke-width=".8"/><ellipse cx="11.5" cy="6" rx="1.8" ry="1.3" fill="#6db3ea"/><path d="M4 8.2H17.5L14.8 16.2H.8Z" fill="#f7e09a" stroke="#c9a84a" stroke-width=".8"/></svg>
<svg style="left:1738.0px;top:299.0px" width="19" height="18" viewBox="0 0 19 18"><defs><linearGradient id="fg1" x1="0" x2="1"><stop offset="0" stop-color="#7fa7bf"/><stop offset=".45" stop-color="#d5e6f0"/><stop offset="1" stop-color="#55809c"/></linearGradient></defs><path d="M.3 .5H18.7V2.6L11 10.5V17L8.3 17.6V10.5L.3 2.6Z" fill="url(#fg1)"/><path d="M.3 1.2H18.7" stroke="#8fb4ca" stroke-width="1.2"/><path d="M12.5 7.5L17 3" stroke="#4f7891" stroke-width="1"/><path d="M5.3 -1.0L6.6 1.1L9.0 0.6L8.5 3.0L10.6 4.3L8.5 5.6L9.0 8.0L6.6 7.5L5.3 9.6L4.0 7.5L1.6 8.0L2.1 5.6L0.0 4.3L2.1 3.0L1.6 0.6L4.0 1.1Z" fill="#f9a11b"/><circle cx="5.1" cy="4" r="2.3" fill="#ffd23e"/></svg>
<svg style="left:1736.8px;top:389.0px" width="19" height="18" viewBox="0 0 19 18"><defs><linearGradient id="fg0" x1="0" x2="1"><stop offset="0" stop-color="#7fa7bf"/><stop offset=".45" stop-color="#d5e6f0"/><stop offset="1" stop-color="#55809c"/></linearGradient></defs><path d="M.3 .5H18.7V2.6L11 10.5V17L8.3 17.6V10.5L.3 2.6Z" fill="url(#fg0)"/><path d="M.3 1.2H18.7" stroke="#8fb4ca" stroke-width="1.2"/><path d="M12.5 7.5L17 3" stroke="#4f7891" stroke-width="1"/></svg>
<svg style="left:1736.8px;top:418.0px" width="19" height="20" viewBox="0 0 19 20"><rect x=".7" y=".7" width="17.6" height="18.6" rx="1" fill="#f4f6f8" stroke="#8e969e" stroke-width="1.2"/><rect x="1.5" y="1.5" width="16" height="2.2" fill="#d4dae0"/><rect x="15" y="1.2" width="1.6" height="1.6" fill="#5a78c8"/><rect x="3.5" y="5.5" width="12" height="9.5" fill="#fff" stroke="#b5bcc4" stroke-width="1"/><rect x="6.5" y="5" width="3.5" height="2" fill="#e3e7eb"/><rect x="11" y="5" width="3.5" height="2" fill="#e3e7eb"/><path d="M7.5 10H13.5M7.5 12.6H13.5" stroke="#a9b1b9" stroke-width="1"/><rect x="5" y="9.3" width="1.3" height="1.6" fill="#28a8ea"/><rect x="5" y="12" width="1.3" height="1.3" fill="#8a949e"/><rect x="7" y="17" width="4.2" height="1.8" fill="#25b6f0"/><rect x="12.5" y="17" width="4" height="1.8" fill="#d0d5da"/></svg>
<svg style="left:1736.2px;top:448.0px" width="21" height="20" viewBox="0 0 21 20"><path d="M1 8C1 4 2 .8 5 .8C7.6 .8 8.4 3 8.6 6V14H1Z" fill="#6c7b86" stroke="#46535d" stroke-width=".8"/><path d="M20 8C20 4 19 .8 16 .8C13.4 .8 12.6 3 12.4 6V14H20Z" fill="#6c7b86" stroke="#46535d" stroke-width=".8"/><path d="M3 4C3.5 2.5 6.5 2.5 7 4L7 12H3Z" fill="#d6dfe2"/><path d="M14 4C14.5 2.5 17.5 2.5 18 4L18 12H14Z" fill="#d6dfe2"/><rect x="8.6" y="4" width="3.8" height="8" fill="#5a6872"/><rect x="9.8" y="5.5" width="1.4" height="4.5" fill="#c9d3d8"/><rect x=".8" y="14" width="8" height="5.2" rx="1" fill="#fff" stroke="#46535d" stroke-width=".8"/><rect x="12.2" y="14" width="8" height="5.2" rx="1" fill="#fff" stroke="#46535d" stroke-width=".8"/><path d="M2.8 14.4H7L5 18.8Z" fill="#2aa4ee"/><path d="M14.2 14.4H18.4L16.4 18.8Z" fill="#2aa4ee"/></svg>
<svg style="left:1738.0px;top:478.2px" width="18" height="19" viewBox="0 0 18 19"><path d="M.6 .8H15.8L17.4 2.4V18.4H.6Z" fill="#4a4a4a" stroke="#2e2e2e" stroke-width=".8"/><rect x="3" y=".8" width="11.6" height="10" fill="#f4f6f4"/><rect x="3.6" y="13.2" width="10.6" height="5.2" fill="#c9c9c9"/><rect x="5" y="14" width="2.6" height="3.6" fill="#3a3a3a"/></svg>
<svg style="left:1738.8px;top:570.8px" width="17" height="20" viewBox="0 0 17 20"><path d="M.7 .7H12L16.3 5V19.3H.7Z" fill="#fff" stroke="#b8b8b8" stroke-width="1.2"/><path d="M12 .7V5H16.3" fill="#eee" stroke="#b8b8b8" stroke-width="1"/><path d="M12.6 9.6A4.6 4.6 0 1 0 12.4 13.2" fill="none" stroke="#2fc32f" stroke-width="2.2"/><path d="M8.8 12.2H15L12.2 16Z" fill="#2fc32f"/></svg>
<svg style="left:1737.8px;top:602.0px" width="16.5" height="20" viewBox="0 0 16.5 20"><rect x=".3" y=".3" width="15.9" height="19.4" fill="#4967d6" stroke="#27379a" stroke-width=".6"/><path d="M.3 .3H4V19.7H.3Z" fill="#2b3fae"/><path d="M4 .3H16.2V8L4 14Z" fill="#6f8ae8" opacity=".55"/><text x="9.4" y="16" font-family="Liberation Sans,sans-serif" font-size="17" font-weight="bold" fill="#fff" text-anchor="middle">?</text></svg>
<svg style="left:1736.8px;top:669.5px" width="19" height="20" viewBox="0 0 19 20"><rect x=".7" y=".7" width="17.6" height="18.6" rx="1" fill="#f4f6f8" stroke="#8e969e" stroke-width="1.2"/><rect x="1.5" y="1.5" width="16" height="2.2" fill="#d4dae0"/><rect x="15" y="1.2" width="1.6" height="1.6" fill="#5a78c8"/><rect x="3.5" y="5.5" width="12" height="9.5" fill="#fff" stroke="#b5bcc4" stroke-width="1"/><rect x="6.5" y="5" width="3.5" height="2" fill="#e3e7eb"/><rect x="11" y="5" width="3.5" height="2" fill="#e3e7eb"/><path d="M7.5 10H13.5M7.5 12.6H13.5" stroke="#a9b1b9" stroke-width="1"/><rect x="5" y="9.3" width="1.3" height="1.6" fill="#28a8ea"/><rect x="5" y="12" width="1.3" height="1.3" fill="#8a949e"/><rect x="7" y="17" width="4.2" height="1.8" fill="#25b6f0"/><rect x="12.5" y="17" width="4" height="1.8" fill="#d0d5da"/></svg>
<svg style="left:1736.8px;top:699.6px" width="20" height="20" viewBox="0 0 20 20"><rect x="3.2" y="1.6" width="16" height="17.4" rx="1" fill="#e9e9e6" stroke="#9a9a96" stroke-width="1.2"/><rect x="3.8" y="1.2" width="14.8" height="2" fill="#8a4a2a"/><rect x="4" y="16.4" width="14.4" height="2" fill="#c4c4c0"/><circle cx="10.8" cy="9.8" r="4.8" fill="#e8f2f8" stroke="#7f8f9a" stroke-width="1.2"/><path d="M10.8 6.4V9.8H13.6" stroke="#555" stroke-width="1" fill="none"/><path d="M4 -.5L5.2 2L7.8 1.4L6.8 3.8L9 5.2L6.6 6.2L6.8 8.8L4.6 7.4L2.6 9L2.4 6.4L0 5.6L2 4L.8 1.6L3.3 2Z" fill="#fbb02a"/></svg>
<svg style="left:1736.8px;top:729.4px" width="20" height="20" viewBox="0 0 20 20"><path d="M.6 .6H6.5L9 3.2V13H.6Z" fill="#fff" stroke="#b4b4b4" stroke-width="1"/><path d="M2.5 5.5H7M2.5 7.8H7M2.5 10H7" stroke="#5d94dc" stroke-width="1.3"/><path d="M8.6 6.6H16.5L19.4 9.5V19.4H8.6Z" fill="#fff" stroke="#b4b4b4" stroke-width="1"/><path d="M11 12H17M11 14.4H17M11 16.8H17" stroke="#5d94dc" stroke-width="1.4"/></svg>
<div class="a" style="left:1219.0px;top:753.0px;width:880.0px;height:32.0px;background:#f5f5f5;"></div>
<div class="a" style="left:973.0px;top:756.0px;width:880.0px;height:29.0px;background:#f5f5f5;"></div>
<div class="a" style="left:1219.0px;top:755.6px;width:880.0px;height:1.0px;background:#e2e6e2;"></div>
<div class="a" style="left:1678.5px;top:757.0px;width:1.2px;height:26.0px;background:#d0d0d0;"></div>
<!-- bottom strip -->
<div class="a" style="left:0;top:784.3px;width:1846px;height:6px;background:#2b7e9c"></div><div class="a" style="left:0;top:784.3px;width:1846px;height:1.2px;background:#1f5f7a"></div>
</div>
</body></html>
